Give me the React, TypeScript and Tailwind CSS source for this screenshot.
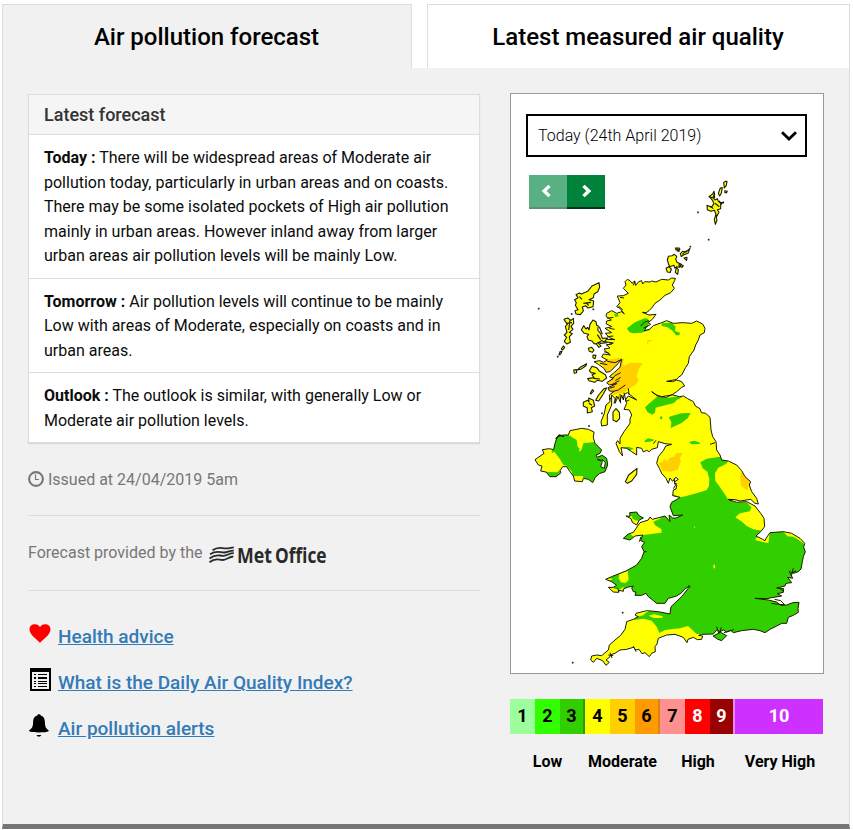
import type { ReactNode } from "react";

const MAINLAND =
  "M322 328L330 332L336 340L344 333L347 346L356 335L365 332L368 342L374 335L390 336L395 333L408 336L425 328L445 330L455 324L466 325L464 332L457 345L463 355L452 368L435 376L420 390L405 400L395 414L387 422L379 428L367 427L387 435L408 433L397 448L385 457L392 463L380 470L373 482L388 478L400 467L425 458L440 452L460 460L490 458L515 460L530 453L548 462L555 475L553 488L540 495L535 510L527 525L522 540L508 560L505 580L497 592L485 615L475 622L470 628L440 634L458 635L470 630L485 635L494 648L485 652L470 665L455 675L425 680L410 675L395 665L415 680L440 682L455 674L478 680L490 678L503 686L520 695L526 708L540 716L544 728L557 730L570 742L572 765L573 780L578 800L588 815L590 840L600 855L605 870L625 873L650 885L665 902L675 920L692 935L688 945L695 965L710 985L715 1002L705 1000L692 988L660 993L645 989L625 988L650 997L680 995L705 1008L722 1030L732 1045L734 1070L722 1085L708 1098L728 1108L735 1112L738 1105L750 1088L790 1085L815 1090L840 1105L854 1120L851 1132L856 1145L850 1160L847 1175L843 1197L835 1205L820 1210L808 1204L818 1225L803 1222L815 1238L798 1240L795 1248L770 1254L791 1256L790 1267L772 1271L785 1278L755 1283L740 1286L705 1285L745 1290L770 1296L782 1306L800 1305L818 1298L837 1297L834 1315L835 1327L820 1336L805 1342L800 1360L785 1360L770 1368L750 1378L735 1388L720 1382L700 1378L665 1382L640 1388L632 1381L620 1386L610 1380L598 1386L592 1378L580 1392L545 1393L536 1396L548 1398L545 1408L532 1409L520 1402L504 1408L501 1418L490 1402L465 1393L440 1395L415 1405L411 1422L405 1430L406 1445L395 1450L388 1460L375 1448L366 1451L357 1438L348 1440L340 1432L320 1438L300 1440L285 1450L272 1454L270 1460L258 1470L268 1477L258 1486L248 1472L230 1465L220 1477L212 1470L215 1458L230 1455L245 1457L265 1440L268 1425L285 1410L302 1396L315 1378L320 1355L340 1348L355 1340L346 1336L348 1330L380 1322L415 1325L450 1332L453 1310L485 1280L510 1248L495 1256L485 1268L470 1278L445 1285L435 1300L410 1300L398 1290L385 1280L378 1270L365 1276L345 1276L348 1266L340 1265L335 1254L340 1248L322 1252L310 1257L310 1264L295 1260L296 1267L280 1266L265 1252L280 1252L290 1246L275 1235L257 1228L275 1220L300 1210L320 1202L350 1185L365 1165L372 1145L365 1130L374 1117L362 1112L368 1095L345 1098L330 1110L310 1105L325 1092L340 1087L355 1065L360 1058L385 1050L390 1041L397 1048L435 1038L450 1055L447 1035L458 1044L468 1044L488 1035L460 1037L450 1010L455 997L468 990L480 982L458 977L460 960L468 957L470 946L463 936L475 928L467 922L458 934L450 924L445 940L438 925L425 910L418 895L410 880L415 860L430 842L437 828L455 823L435 821L415 815L412 833L395 838L388 845L380 841L370 846L365 835L350 832L350 855L335 845L320 835L303 833L308 858L298 845L288 820L293 812L300 822L300 805L312 785L330 760L330 747L335 735L328 720L312 718L320 700L316 690L325 678L350 690L322 668L312 674L310 690L305 675L300 695L294 680L285 700L285 685L275 675L275 705L262 735L262 765L245 768L243 755L253 730L258 705L270 695L268 675L282 664L268 663L264 653L290 641L268 645L260 638L280 625L268 620L280 610L300 592L305 568L290 585L270 605L258 607L252 595L235 583L222 575L240 572L250 577L262 570L245 561L250 552L271 555L258 545L252 537L270 534L260 525L280 519L255 515L257 508L285 509L268 503L256 490L275 488L255 475L275 470L258 461L260 453L274 450L258 439L260 430L275 422L290 430L305 425L313 432L300 415L290 410L300 398L292 378L310 377L325 370L310 355L318 345L315 335Z";

const NORTHERN_IRELAND =
  "M45 869L72 850L67 839L88 836L101 839L105 820L112 800L130 795L145 795L150 782L185 775L205 778L222 786L220 803L225 820L235 830L245 840L240 850L228 855L231 862L247 856L260 865L263 885L255 905L238 911L226 922L218 938L205 928L190 925L187 935L164 933L160 918L150 905L140 890L128 890L120 902L123 908L108 920L90 920L78 906L62 903L66 888L55 885Z";

const ISLES: string[] = [
  // Shetland
  "M611 38L616 34L621 34L619 46L613 54L612 45Z",
  "M601 54L607 53L604 69L599 78L595 70Z",
  "M615 62L622 64L619 69L614 67Z",
  "M568 79L578 72L582 64L584 73L579 82L585 90L592 86L595 94L602 99L611 96L602 103L602 116L592 119L597 127L589 141L591 151L586 163L583 148L588 133L583 121L573 124L562 119L561 106L574 112L582 101L578 92Z",
  // Orkney
  "M442 270L445 259L456 257L463 253L470 259L467 268L471 277L484 283L479 292L471 290L464 294L462 286L449 290L446 283Z",
  "M438 295L446 290L454 297L451 307L442 306Z",
  "M469 293L475 299L473 313L466 307Z",
  "M478 281L490 287L486 292L477 287Z",
  "M466 234L478 234L477 245L470 239Z",
  "M481 251L488 244L498 246L510 235L504 250L490 255L484 260Z",
  "M492 264L501 262L500 271Z",
  // Lewis, Harris and the southern chain
  "M237 338L239 352L233 365L222 372L220 383L207 389L221 393L219 410L204 414L197 407L187 411L190 423L181 434L168 432L165 422L174 419L166 406L169 398L164 389L174 383L168 374L178 369L184 372L203 364L216 348Z",
  "M132 448L143 444L153 451L160 445L161 460L153 469L159 478L148 487L157 491L148 500L151 517L140 522L133 514L140 502L133 495L141 487L136 469L142 463Z",
  "M130 528L134 532L128 540L124 537Z",
  "M120 545L126 544L122 552L117 555Z",
  // Skye
  "M184 480L191 467L198 477L203 472L207 480L210 463L219 450L228 455L230 466L235 468L233 480L242 491L247 505L263 504L252 516L245 511L236 520L243 528L237 532L229 522L222 521L216 513L205 510L201 500L206 493L193 490Z",
  "M205 535L215 532L222 540L217 547L208 544Z",
  "M219 555L228 556L225 566L219 563Z",
  // Mull
  "M208 602L216 589L230 593L237 602L256 614L260 624L246 634L232 631L224 637L207 632L203 626L222 623L216 615L226 610L213 608Z",
  // Tiree and Coll
  "M161 600L169 599L170 608L163 610Z",
  "M172 600L183 590L200 581L197 588L182 598Z",
  // Jura and Islay
  "M227 691L236 675L252 656L260 654L248 675L236 693Z",
  "M190 697L203 691L207 696L206 684L220 691L224 708L214 713L217 725L202 729L202 714L190 708Z",
  "M211 670L217 659L221 663L213 672Z",
  // Arran
  "M279 726L288 716L298 727L299 745L290 755L279 750Z",
  // Isle of Man
  "M316 935L326 915L351 895L350 913L335 933L322 940Z",
];

const ANGLESEY = "M318 1038L330 1039L329 1028L350 1026L356 1036L370 1044L358 1050L350 1065L337 1057L333 1046Z";
const WIGHT = "M579 1398L602 1387L620 1397L605 1412L594 1408Z";

const GREEN = [
  // England and Wales
  "M541 877L560 866L600 860L607 866L625 873L618 882L595 893L585 910L586 932L600 952L616 975L625 990L650 998L680 997L694 1012L690 1024L660 1030L646 1042L666 1055L680 1068L700 1078L726 1082L705 1110L745 1120L750 1080L797 1085L822 1100L850 1120L870 1150L850 1400L560 1400L546 1391L530 1392L504 1368L480 1375L435 1380L418 1389L410 1370L395 1352L370 1346L340 1350L354 1336L385 1325L390 1320L450 1330L440 1310L400 1320L340 1280L250 1290L240 1210L345 1180L355 1120L300 1112L325 1088L335 1095L340 1100L375 1094L425 1088L424 1078L405 1065L400 1055L420 1046L445 1020L445 1000L475 982L490 980L535 968L560 960L567 948L568 928L562 905L548 895Z",
  // Scotland
  "M321 475L345 457L374 445L384 446L388 458L382 470L396 465L390 480L364 488L340 490L328 487Z",
  "M425 460L455 458L467 470L465 483L480 488L478 496L468 496L458 483L443 472L425 468Z",
  "M282 432L294 433L296 439L286 441Z",
  "M375 712L390 698L410 681L440 684L470 680L487 682L470 690L462 699L435 706L407 713L405 728L397 734L382 726Z",
  "M420 740L427 739L426 748L420 747Z",
  "M446 742L455 738L485 730L512 729L503 745L485 759L452 774L454 756Z",
  "M373 813L384 805L403 809L397 814L375 817Z",
  "M507 816L522 812L538 817L540 822L515 823Z",
  "M304 833L325 830L342 836L325 842L304 840Z",
  "M452 970L480 982L460 990L450 990Z",
];

const YELLOW = [
  "M298 1212L323 1203L326 1230L316 1239L303 1237L296 1225Z",
  "M254 1228L275 1225L275 1229L262 1235Z",
  "M266 1247L286 1257L302 1257L310 1250L315 1268L275 1270Z",
  "M346 1325L381 1323L370 1336L352 1340Z",
  "M386 1337L402 1333L428 1339L427 1343L402 1344Z",
  "M788 1084L820 1088L854 1117L835 1108L820 1100L803 1099Z",
  "M579 1187L584 1183L586 1193L582 1196Z",
  "M522 1070L525 1070L525 1073L522 1073Z",
];

const AMBER = [
  "M236 573L272 568L302 563L312 568L308 582L312 587L330 578L368 579L357 596L350 618L356 631L346 645L325 657L310 668L275 675L260 660L265 625L300 595L280 605L258 607L252 590Z",
  "M382 510L398 510L398 513L387 514L384 522L381 522Z",
  "M416 880L428 875L432 866L440 874L452 862L462 860L468 850L488 848L480 865L482 875L473 900L452 905L428 903Z",
  "M660 915L666 905L690 925L694 937L687 945L682 962L663 947Z",
];

const DOTS = [
  [534, 127], [566, 209], [56, 416], [220, 418], [155, 432], [158, 1478], [308, 1328], [511, 230], [207, 768], [113, 560], [246, 730],
];

function AirQualityMap() {
  return (
    <svg viewBox="-27 -39 936 1548" className="block h-[516px] w-[312px]" strokeLinejoin="round" aria-label="Map">
      <defs>
        <clipPath id="mainland">
          <path d={MAINLAND} />
        </clipPath>
        <clipPath id="ni">
          <path d={NORTHERN_IRELAND} />
        </clipPath>
        <clipPath id="anglesey">
          <path d={ANGLESEY} />
        </clipPath>
      </defs>
      <path d={MAINLAND} fill="#ff0" />
      <g clipPath="url(#mainland)">
        <path d={GREEN.join("")} fill="#31cf00" />
        <path d={YELLOW.join("")} fill="#ff0" />
        <path d={AMBER.join("")} fill="#ffcf00" />
      </g>
      <g fill="none" stroke="#1c1c00" strokeWidth="3">
        <path d={MAINLAND} />
        <path
          strokeWidth="3"
          d="M387 452L374 456L362 468M383 468L371 474M305 568L285 578L262 574M302 608L285 617L272 631M302 622L286 632M316 645L295 660L280 664M300 672L302 700M312 668L318 694L328 690M290 678L282 700M325 655L327 674M400 821L408 811M570 823L585 818M625 988L634 994M590 1370L596 1390M604 1372L598 1390M612 1388L642 1379M505 1246L511 1252M820 1195L814 1218M828 1203L810 1211M775 1252L790 1264M754 1300L775 1303L794 1304L782 1292L764 1288M340 1428L348 1445M270 1448L276 1464M265 1455L280 1457M290 1254L300 1264M372 1145L380 1145M363 1100L358 1115M463 925L464 943M470 940L460 956M268 475L284 478M262 500L280 498M258 525L276 522M252 545L268 550M240 580L262 584M276 644L298 632M268 655L284 650M268 690L276 680M345 333L340 346M300 382L312 384M296 408L308 420M262 445L280 442"
        />
      </g>
      <path d={NORTHERN_IRELAND} fill="#ff0" />
      <g clipPath="url(#ni)">
        <path
          fill="#31cf00"
          d="M95 850L98 815L108 785L150 797L160 804L170 810L173 830L179 836L177 844L181 844L185 838L190 820L225 816L280 840L280 920L215 950L205 930L193 928L188 918L158 918L156 905L140 888L130 884L120 868L103 845ZM75 905L110 907L122 900L115 925L80 925Z"
        />
      </g>
      <path d={NORTHERN_IRELAND} fill="none" stroke="#1c1c00" strokeWidth="3" />
      <path d="M247 868L256 878L253 895L242 890L246 878Z" fill="#fff" stroke="#1c1c00" strokeWidth="3" />
      <path d="M232 868L244 872M107 807L118 795L132 800" fill="none" stroke="#1c1c00" strokeWidth="4" />
      <path d={ISLES.join("")} fill="#ff0" stroke="#1c1c00" strokeWidth="3.3" />
      <path
        d="M600 99L612 98M582 70L584 84M585 100L598 110M487 253L500 242M481 236L470 244M190 400L213 397M178 380L186 388M150 450L146 480M238 470L247 493M228 521L240 515M232 494L242 509M240 520L262 518M220 625L240 627M207 700L216 706M466 240L474 236M566 80L580 84M570 108L580 116M598 92L604 104M586 135L592 138M198 398L206 406M140 460L156 458"
        fill="none"
        stroke="#1c1c00"
        strokeWidth="3.5"
      />
      <path d={ANGLESEY} fill="#31cf00" />
      <path d="M315 1036L335 1038L338 1046L350 1052L360 1050L350 1068L332 1060Z" fill="#ff0" clipPath="url(#anglesey)" />
      <path d={ANGLESEY} fill="none" stroke="#1c1c00" strokeWidth="3" />
      <path d={WIGHT} fill="#31cf00" stroke="#1c1c00" strokeWidth="3" />
      {DOTS.map(([x, y]) => (
        <rect key={`${x}-${y}`} x={x - 2.5} y={y - 2.5} width="5" height="5" fill="#222" />
      ))}
    </svg>
  );
}

function Chevron({ left = false }: { left?: boolean }) {
  return (
    <svg viewBox="0 0 12 14" className={left ? "mr-[4px] h-[14px] w-3" : "ml-[2px] h-[14px] w-3"}>
      <path d={left ? "M10.700 3L8.300 .8L1.700 7L8.300 13.200L10.700 11L6.600 7Z" : "M1.300 3L3.700 .8L10.300 7L3.700 13.200L1.300 11L5.400 7Z"} fill="#fff" />
    </svg>
  );
}

function ForecastRow({ label, children }: { label: string; children: ReactNode }) {
  return (
    <p className="border-t border-[#ddd] bg-white px-[15px] pt-[11px] pb-[9px] text-[16px] leading-[24.5px] text-[#0b0c0c]">
      <b className="font-bold">{label} :</b> {children}
    </p>
  );
}

function MetOfficeLogo() {
  return (
    <svg viewBox="0 0 120 30" className="mt-[2px] ml-[7px] h-[30px] w-[120px] overflow-visible">
      <g fill="none" stroke="#2a2a2a" strokeWidth="1.800">
        <path d="M3.500 7.300C9 3.300 12 5.100 16 5.400S22 4.500 24.800 4.400" />
        <path d="M1 11.200C8 6.800 11 9.600 15 9.500S20 7.600 24.800 7.700" />
        <path d="M.5 15.400C8 10 10 13.100 14.500 12.800S20 10.100 24.800 10.200" />
        <path d="M.5 19.200C7 13.800 10 17.300 14 17S20 13.800 24.300 13.500" />
      </g>
      <g className="fill-[#2a2a2a] font-['Open_Sans','Noto_Sans',sans-serif] text-[20.5px] font-bold">
        <text x="28" y="20" textLength="35" lengthAdjust="spacingAndGlyphs">
          Met
        </text>
        <text x="66" y="20" textLength="51.500" lengthAdjust="spacingAndGlyphs">
          Office
        </text>
      </g>
    </svg>
  );
}

const LEVELS = [
  { n: 1, cls: "w-[25px] bg-[#9cff9c]" },
  { n: 2, cls: "w-[25px] bg-[#31ff00]" },
  { n: 3, cls: "w-[25px] border-r-2 border-[#2a9a0a] bg-[#31cf00]" },
  { n: 4, cls: "w-[25px] bg-[#ff0]" },
  { n: 5, cls: "w-[25px] bg-[#ffcf00]" },
  { n: 6, cls: "w-[25px] border-r-2 border-[#d8860e] bg-[#ff9a00]" },
  { n: 7, cls: "w-[25px] bg-[#ff9090]" },
  { n: 8, cls: "w-[25px] bg-[#f00] text-white" },
  { n: 9, cls: "w-[25px] border-r-2 border-[#e58bf5] bg-[#900] text-white" },
  { n: 10, cls: "w-[88px] bg-[#ce30ff] text-white" },
];

function Legend() {
  return (
    <div className="mt-[25px] w-[313px] font-bold text-black">
      <div className="flex h-[35px] text-[18px] leading-[34px]">
        {LEVELS.map((l) => (
          <div key={l.n} className={`text-center ${l.cls}`}>
            {l.n}
          </div>
        ))}
      </div>
      <div className="mt-4 flex text-center text-[16px] leading-6 whitespace-nowrap">
        <span className="w-[75px] shrink-0">Low</span>
        <span className="w-[75px] shrink-0">Moderate</span>
        <span className="w-[76px] shrink-0">High</span>
        <span className="w-[88px] shrink-0">Very High</span>
      </div>
    </div>
  );
}

function HeartIcon() {
  return (
    <svg viewBox="0 0 22 20" className="mt-[2px] -ml-px h-5 w-[22px]">
      <path fill="#f00" d="M11 19C9 16 .5 11 .5 5.500C.5 2 3 .2 5.700 .2C8.500 .2 10 1.500 11 3C12 1.500 13.500 .2 16.300 .2C19 .2 21.500 2 21.500 5.500C21.500 11 13 16 11 19Z" />
    </svg>
  );
}

function ListIcon() {
  return (
    <svg viewBox="0 0 21 23" className="h-[23px] w-[21px]" shapeRendering="crispEdges">
      <path fillRule="evenodd" d="M0 0H21V23H0ZM2 4V21H19V4Z" />
      <path d="M4 6h2v1H4zM4 9h2v2H4zM4 13h2v1H4zM4 15h2v1H4zM4 18h2v1H4zM8 6h9v1H8zM8 9h9v2H8zM8 13h9v1H8zM8 15h9v1H8zM8 18h9v1H8z" />
    </svg>
  );
}

function BellIcon() {
  return (
    <svg viewBox="0 0 22 23" className="-ml-px h-[23px] w-[22px]">
      <path d="M8.300 1.500C8.300 -.2 11.700 -.2 11.700 1.500C15 2.600 15.800 5.200 15.900 8C16 12.500 16.800 14.500 19.600 16.200V17.200C17 18.800 3 18.800 .2 17.200V16.200C3.200 14.500 4 12.500 4.100 8C4.200 5.200 5 2.600 8.300 1.500ZM7.600 21H12.200C11.600 23.300 8.200 23.300 7.600 21Z" />
    </svg>
  );
}

function AdviceLink({ icon, children }: { icon: ReactNode; children: ReactNode }) {
  return (
    <li className="flex h-[46px] items-start">
      <span className="flex w-[30px] shrink-0 pl-[2px]">{icon}</span>
      <a href="#" className="mt-[3px] text-[19px] leading-6 font-medium text-[#337ab7] underline">
        {children}
      </a>
    </li>
  );
}

export default function App() {
  return (
    <div className="h-[830px] w-[853px] overflow-hidden bg-white pt-1 pl-[2px] font-['Roboto',sans-serif]">
      <div className="flex w-[848px] justify-between text-center text-[24px] leading-[64px] font-medium text-black">
        <h2 className="h-16 w-[410px] border-x border-t border-[#ddd] bg-[#f1f1f1] pr-px">Air pollution forecast</h2>
        <h2 className="h-16 w-[423px] border-x border-t border-[#ddd] bg-white pr-px">Latest measured air quality</h2>
      </div>
      <main className="flex h-[761px] w-[848px] justify-between border-x border-b-[5px] border-x-[#ddd] border-b-[#757575] bg-[#f1f1f1] pt-[25px] pr-[25px] pl-[25px]">
        <section className="mt-px w-[452px]">
          <div className="border border-[#ddd] shadow-[0_1px_1px_rgba(0,0,0,0.1)]">
            <h3 className="h-[39px] bg-[#f5f5f5] px-[15px] text-[18px] leading-[40px] font-medium text-[#333]">Latest forecast</h3>
            <ForecastRow label="Today">
              There will be widespread areas of Moderate air pollution today, particularly in urban areas and on coasts. There may be some
              isolated pockets of High air pollution mainly in urban areas. However inland away from larger urban areas air pollution levels
              will be mainly Low.
            </ForecastRow>
            <ForecastRow label="Tomorrow">
              Air pollution levels will continue to be mainly Low with areas of Moderate, especially on coasts and in urban areas.
            </ForecastRow>
            <ForecastRow label="Outlook">The outlook is similar, with generally Low or Moderate air pollution levels.</ForecastRow>
          </div>
          <div className="mt-6 flex h-[49px] border-b border-[#ddd] text-[16px] leading-[26px] text-[#777]">
            <svg viewBox="0 0 16 16" className="mt-[4px] mr-1 h-4 w-4" fill="none" stroke="#777">
              <circle cx="8" cy="8" r="6.900" strokeWidth="2.100" />
              <path d="M7.500 3.500V8.500H11" strokeWidth="1.200" />
            </svg>
            Issued at 24/04/2019 5am
          </div>
          <div className="flex h-[75px] border-b border-[#ddd] pt-[25px] text-[16px] leading-6 text-[#777]">
            Forecast provided by the
            <MetOfficeLogo />
          </div>
          <ul className="mt-[31px]">
            <AdviceLink icon={<HeartIcon />}>Health advice</AdviceLink>
            <AdviceLink icon={<ListIcon />}>What is the Daily Air Quality Index?</AdviceLink>
            <AdviceLink icon={<BellIcon />}>Air pollution alerts</AdviceLink>
          </ul>
        </section>
        <section className="w-[314px]">
          <div className="h-[581px] border border-[#999] bg-white">
            <button className="mt-5 ml-[15px] flex h-[43px] w-[281px] items-center justify-between border-2 border-black pr-[8px] pl-[10px] text-[16px] font-light text-black">
              Today (24th April 2019)
              <svg viewBox="0 0 16 10" className="h-[10px] w-4" fill="none" stroke="#000" strokeWidth="2.800">
                <path d="M1 1.200L8 8L15 1.200" />
              </svg>
            </button>
            <div className="relative">
              <AirQualityMap />
              <div className="absolute top-[18px] left-[18px] flex h-[34px] w-[76px]">
                <button className="flex w-[38px] items-center justify-center border-b-2 border-[#5d8f75] bg-[#59b082]">
                  <Chevron left />
                </button>
                <button className="flex w-[38px] items-center justify-center border-b-2 border-[#003518] bg-[#00823b]">
                  <Chevron />
                </button>
              </div>
            </div>
          </div>
          <Legend />
        </section>
      </main>
    </div>
  );
}
